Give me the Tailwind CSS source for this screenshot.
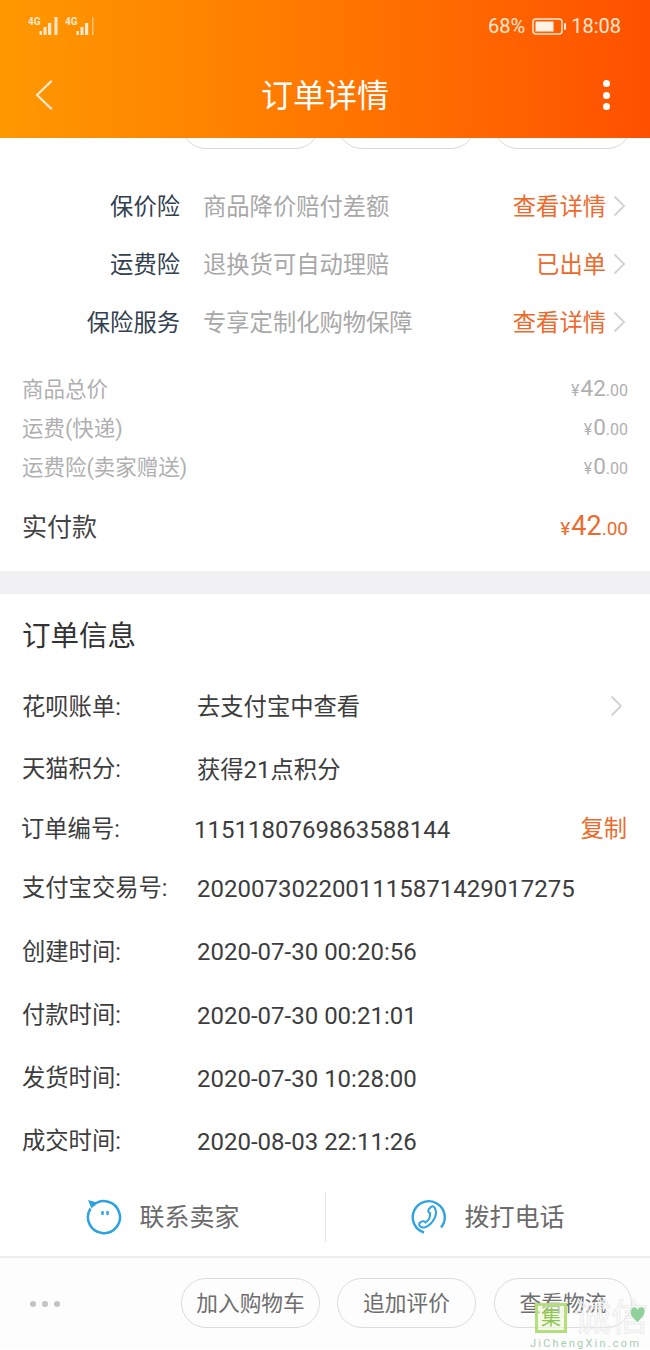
<!DOCTYPE html>
<html lang="zh-CN">
<head>
  <meta charset="UTF-8" />
  <meta name="viewport" content="width=device-width, initial-scale=1.0"/>
  <title>订单详情</title>
  <script src="https://cdn.jsdelivr.net/npm/@tailwindcss/browser@4"></script>
</head>
<body class="bg-white [font-family:Roboto,'Noto_Sans_CJK_SC',sans-serif]">
  <div class="relative w-[650px] h-[1350px] overflow-hidden flex flex-col">

    <!-- header -->
    <header class="relative z-10 h-[138px] shrink-0 bg-gradient-to-r from-[#ff9800] to-[#ff5000] text-white">
      <div class="h-[52px] flex items-center justify-between pl-[28px] pr-[29px] text-[#ffe8d0]">
        <div class="flex items-end gap-[5px]">
          <svg width="32" height="20" viewBox="0 0 32 20" fill="#ffe8d0">
            <text x="0" y="9" font-size="10" font-weight="700" font-family="Roboto">4G</text>
            <rect x="11.500" y="15" width="2.500" height="4"/><rect x="15.500" y="11" width="3" height="8"/><rect x="20" y="7" width="3.200" height="12"/><rect x="26.500" y="1" width="3" height="18"/>
          </svg>
          <svg width="32" height="20" viewBox="0 0 32 20" fill="#ffe8d0">
            <text x="0" y="9" font-size="10" font-weight="700" font-family="Roboto">4G</text>
            <rect x="11.500" y="15" width="2.500" height="4"/><rect x="15.500" y="11" width="3" height="8"/><rect x="20" y="7" width="3.200" height="12"/><rect x="27" y="1" width="1.500" height="18" opacity="0.6"/>
          </svg>
        </div>
        <div class="flex items-center gap-[5px] text-[20px]">
          <span class="mr-[2px]">68%</span>
          <svg width="34" height="17" viewBox="0 0 34 17">
            <rect x="1" y="1" width="29" height="15" rx="3" fill="none" stroke="#ffe8d0" stroke-width="1.500"/>
            <rect x="3.500" y="3.500" width="18" height="10" fill="#fff3e8"/>
            <rect x="32" y="5" width="2" height="7" rx="1" fill="#ffe8d0"/>
          </svg>
          <span>18:08</span>
        </div>
      </div>
      <div class="relative h-[86px] flex items-center justify-center pt-[2px]">
        <svg class="absolute left-[35px] top-[28px]" width="18" height="30" viewBox="0 0 18 30" fill="none" stroke="#ffe8d0" stroke-width="2.400" stroke-linecap="round" stroke-linejoin="round"><path d="M16 1.500 2 15l14 13.500"/></svg>
        <h1 class="text-[32px] font-normal leading-none">订单详情</h1>
        <div class="absolute left-[603px] top-[28px] flex flex-col gap-[4.500px]">
          <span class="w-[7px] h-[7px] rounded-full bg-white"></span>
          <span class="w-[7px] h-[7px] rounded-full bg-white"></span>
          <span class="w-[7px] h-[7px] rounded-full bg-white"></span>
        </div>
      </div>
    </header>

    <!-- buttons scrolled under the header -->
    <div class="h-[40px] shrink-0 relative">
      <div class="flex gap-[17px] pl-[181px] -mt-[39px]">
        <div class="w-[139px] h-[50px] rounded-[25px] border border-[#d9d9d9]"></div>
        <div class="w-[139px] h-[50px] rounded-[25px] border border-[#d9d9d9]"></div>
        <div class="w-[139px] h-[50px] rounded-[25px] border border-[#d9d9d9]"></div>
      </div>
    </div>

    <!-- insurance -->
    <section class="shrink-0 text-[23.300px]">
      <div class="h-[58px] flex items-center pr-[24px]">
        <span class="w-[180px] text-right text-[#33404f]">保价险</span>
        <span class="ml-[23px] text-[#a8a8a8]">商品降价赔付差额</span>
        <span class="ml-auto text-[#ee6a2c]">查看详情</span>
        <svg class="ml-[7px] -mt-[2px]" width="13" height="22" viewBox="0 0 13 22" fill="none" stroke="#d4d4d4" stroke-width="2"><path d="M1.500 1.500 11 11l-9.500 9.500"/></svg>
      </div>
      <div class="h-[58px] flex items-center pr-[24px]">
        <span class="w-[180px] text-right text-[#33404f]">运费险</span>
        <span class="ml-[23px] text-[#a8a8a8]">退换货可自动理赔</span>
        <span class="ml-auto text-[#ee6a2c]">已出单</span>
        <svg class="ml-[7px] -mt-[2px]" width="13" height="22" viewBox="0 0 13 22" fill="none" stroke="#d4d4d4" stroke-width="2"><path d="M1.500 1.500 11 11l-9.500 9.500"/></svg>
      </div>
      <div class="h-[58px] flex items-center pr-[24px]">
        <span class="w-[180px] text-right text-[#33404f]">保险服务</span>
        <span class="ml-[23px] text-[#a8a8a8]">专享定制化购物保障</span>
        <span class="ml-auto text-[#ee6a2c]">查看详情</span>
        <svg class="ml-[7px] -mt-[2px]" width="13" height="22" viewBox="0 0 13 22" fill="none" stroke="#d4d4d4" stroke-width="2"><path d="M1.500 1.500 11 11l-9.500 9.500"/></svg>
      </div>
    </section>

    <!-- prices -->
    <section class="shrink-0 pt-[19px] px-[22px] text-[#b0b0b0]">
      <div class="h-[39px] flex items-center justify-between text-[21.500px]">
        <span>商品总价</span>
        <span class="flex items-baseline -mt-[3px]"><span class="text-[16px] mr-[1px]">¥</span><span class="text-[22.500px]">42</span><span class="text-[16px]">.00</span></span>
      </div>
      <div class="h-[39px] flex items-center justify-between text-[21.500px]">
        <span>运费(快递)</span>
        <span class="flex items-baseline -mt-[3px]"><span class="text-[16px] mr-[1px]">¥</span><span class="text-[22.500px]">0</span><span class="text-[16px]">.00</span></span>
      </div>
      <div class="h-[39px] flex items-center justify-between text-[21.500px]">
        <span>运费险(卖家赠送)</span>
        <span class="flex items-baseline -mt-[3px]"><span class="text-[16px] mr-[1px]">¥</span><span class="text-[22.500px]">0</span><span class="text-[16px]">.00</span></span>
      </div>
      <div class="h-[56px] mt-[11px] pt-[2px] flex items-center justify-between">
        <span class="text-[25px] text-[#444444]">实付款</span>
        <span class="flex items-baseline text-[#ee6a2c] -mt-[3px]"><span class="text-[19px] mr-[1px]">¥</span><span class="text-[27px]">42</span><span class="text-[19px]">.00</span></span>
      </div>
    </section>

    <div class="h-[23px] mt-[16px] shrink-0 bg-[#f1f1f3]"></div>

    <!-- order info -->
    <section class="shrink-0 text-[23.300px] text-[#3d3d3d]">
      <h2 class="h-[81px] pt-[5px] pl-[22px] flex items-center text-[28.500px] font-normal text-[#333333]">订单信息</h2>
      <div class="h-[62px] pt-[2px] flex items-center pl-[22px] pr-[27px]">
        <span class="w-[175px]">花呗账单:</span>
        <span>去支付宝中查看</span>
        <svg class="ml-auto -mt-[2px]" width="13" height="22" viewBox="0 0 13 22" fill="none" stroke="#d4d4d4" stroke-width="2"><path d="M1.500 1.500 11 11l-9.500 9.500"/></svg>
      </div>
      <div class="h-[62px] pt-[3px] flex items-center pl-[22px]">
        <span class="w-[175px]">天猫积分:</span>
        <span>获得<span class="text-[24px]">21</span>点积分</span>
      </div>
      <div class="h-[59px] pt-[2px] flex items-center pl-[21px] pr-[23px]">
        <span class="w-[173px]">订单编号:</span>
        <span class="text-[24px]">1151180769863588144</span>
        <span class="ml-auto text-[#ee6a2c]">复制</span>
      </div>
      <div class="h-[61px] flex items-center pl-[22px]">
        <span class="w-[175px]">支付宝交易号:</span>
        <span class="text-[24px]">2020073022001115871429017275</span>
      </div>
      <div class="h-[64px] pt-[2px] flex items-center pl-[22px]">
        <span class="w-[175px]">创建时间:</span>
        <span class="text-[24px]">2020-07-30 00:20:56</span>
      </div>
      <div class="h-[63px] pt-[2px] flex items-center pl-[22px]">
        <span class="w-[175px]">付款时间:</span>
        <span class="text-[24px]">2020-07-30 00:21:01</span>
      </div>
      <div class="h-[63px] pt-[2px] flex items-center pl-[22px]">
        <span class="w-[175px]">发货时间:</span>
        <span class="text-[24px]">2020-07-30 10:28:00</span>
      </div>
      <div class="h-[63px] pt-[2px] flex items-center pl-[22px]">
        <span class="w-[175px]">成交时间:</span>
        <span class="text-[24px]">2020-08-03 22:11:26</span>
      </div>
    </section>

    <!-- contact -->
    <section class="h-[86px] shrink-0 pt-[6px] flex items-center border-b-2 border-[#eeeeee] text-[25px] text-[#6b6b6b]">
      <div class="w-[326px] h-[50px] flex items-center justify-center gap-[17px] pl-[1px] border-r border-[#e6e6e6]">
        <svg width="36" height="36" viewBox="0 0 36 36" fill="none">
          <path d="M7 6.500A16 16 0 1 1 4.500 9.500" stroke="#2da3e3" stroke-width="2.500"/>
          <path d="M2 1 11 3.500 5.500 9.500z" fill="#2da3e3"/>
          <ellipse cx="16.500" cy="14" rx="1.400" ry="2.300" fill="#2da3e3"/>
          <ellipse cx="21.500" cy="14" rx="1.400" ry="2.300" fill="#2da3e3"/>
        </svg>
        <span class="mt-[2px]">联系卖家</span>
      </div>
      <div class="w-[324px] h-[50px] flex items-center justify-center gap-[17px]">
        <svg width="36" height="36" viewBox="0 0 36 36" fill="none" stroke="#2da3e3" stroke-width="2.400">
          <path d="M13 33.500A16 16 0 1 1 30 28.500"/>
          <path d="M20.500 7.500c2.500-1.500 4.500 3 4.500 6 0 6-6 14-12 15-4 .5-6-3-4-5 2-1.500 4.500-2 5.500 0 3-2 5-6 4.500-9.500-1.500-.5-2.500-2-1-4z" stroke-width="2"/>
        </svg>
        <span class="mt-[2px]">拨打电话</span>
      </div>
    </section>

    <!-- bottom bar -->
    <footer class="h-[91px] shrink-0 pt-[20px] pl-[30px] flex items-start text-[21.700px] text-[#6e6e6e] bg-[#fdfdfd]">
      <div class="h-[50px] pt-[2px] flex items-center gap-[6px]">
        <span class="w-[6px] h-[6px] rounded-full bg-[#c4c4c4]"></span>
        <span class="w-[6px] h-[6px] rounded-full bg-[#c4c4c4]"></span>
        <span class="w-[6px] h-[6px] rounded-full bg-[#c4c4c4]"></span>
      </div>
      <div class="ml-[121px] flex gap-[17px]">
        <div class="w-[139px] h-[50px] pt-[2px] rounded-[25px] border border-[#dcdcdc] flex items-center justify-center">加入购物车</div>
        <div class="w-[139px] h-[50px] pt-[2px] rounded-[25px] border border-[#dcdcdc] flex items-center justify-center">追加评价</div>
        <div class="w-[138px] ml-[1px] h-[50px] pt-[2px] rounded-[25px] border border-[#dcdcdc] flex items-center justify-center">查看物流</div>
      </div>
    </footer>

    <!-- watermark -->
    <div class="absolute left-[530px] top-[1303px] w-[120px] h-[47px]">
      <div class="flex items-start pl-[5px]">
        <div class="w-[32px] h-[30px] border-[3px] border-[#b5de7c] bg-[#eef8d8]/60 flex items-center justify-center text-[20px] leading-none text-[#8fc653]">集</div>
        <span class="ml-[7px] text-[37px] leading-[32px] text-white/30 [-webkit-text-stroke:1px_#ececec] whitespace-nowrap">诚信</span>
      </div>
      <svg class="absolute left-[98px] top-[2px]" width="19" height="18" viewBox="0 0 18 18" fill="#8fd09c"><path d="M9 17C3 12 1 9 3 4c2-3 5-2 6 1 1-3 5-4 7-1 1 5-2 8-7 13z"/></svg>
      <div class="text-[11px] leading-none mt-[3px] tracking-[2.200px] text-[#a5cfb0] whitespace-nowrap">JiChengXin.com</div>
    </div>
  </div>
</body>
</html>
